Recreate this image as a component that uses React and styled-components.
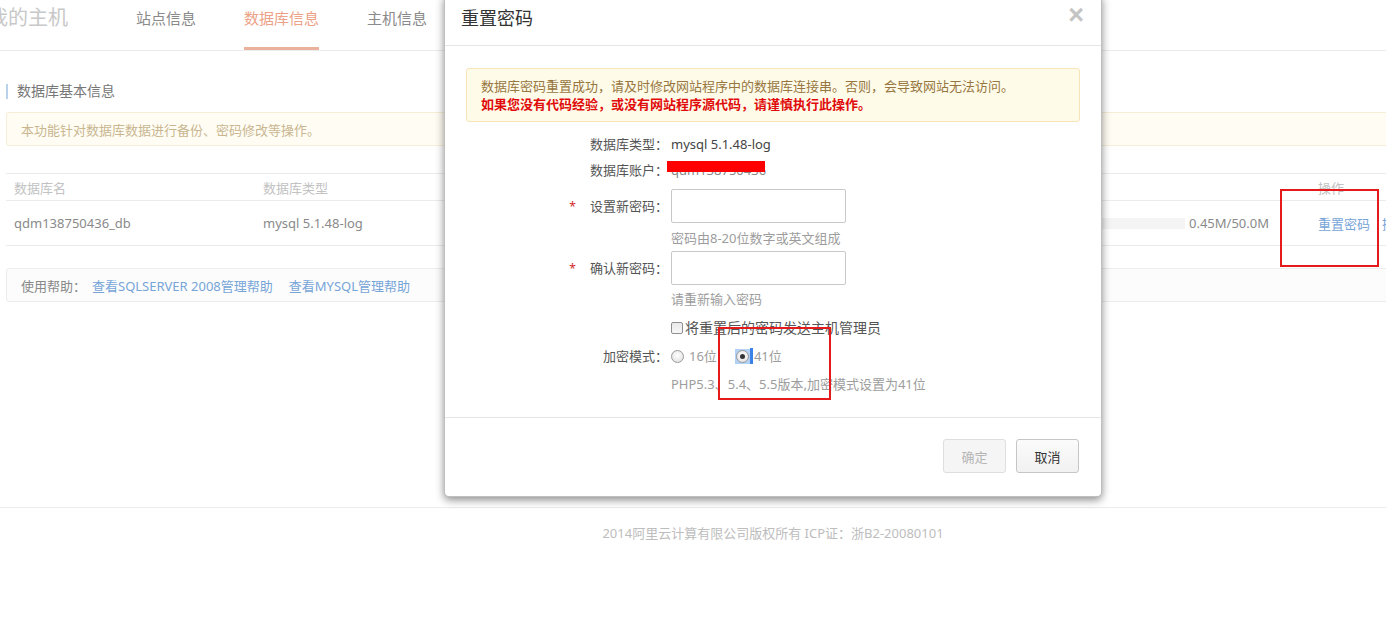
import React from "react";
import styled, { createGlobalStyle } from "styled-components";

const Global = createGlobalStyle`
  html, body { margin: 0; padding: 0; background: #fff; overflow: hidden; }
  body { font-family: "Noto Sans", "Noto Sans CJK SC", sans-serif; color: #555; }
  * { box-sizing: border-box; }
`;

const Page = styled.div`
  position: relative;
  width: 1546px;
  height: 635px;
`;

const Nav = styled.div`
  display: flex;
  align-items: flex-start;
  height: 51px;
  border-bottom: 1px solid #ececec;
`;

const Brand = styled.div`
  margin-left: -12px;
  width: 124px;
  padding-top: 6px;
  font-size: 20px;
  line-height: 24px;
  color: #c8c8c8;
`;

const Tab = styled.div`
  margin: 0 24px;
  height: 50px;
  padding-top: 8px;
  font-size: 15px;
  line-height: 20px;
  color: ${(p) => (p.$active ? "#eda287" : "#8a8a8a")};
  border-bottom: 3px solid ${(p) => (p.$active ? "#eab29c" : "transparent")};
`;

const Main = styled.div`
  padding: 32px 6px 0;
  height: 456px;
`;

const SectionTitle = styled.div`
  display: flex;
  align-items: center;
  font-size: 14px;
  line-height: 16px;
  color: #777;
  &::before {
    content: "";
    width: 2px;
    height: 15px;
    background: #b9d1ea;
    margin-right: 9px;
  }
`;

const Notice = styled.div`
  margin-top: 13px;
  height: 34px;
  border: 1px solid #f6eed6;
  background: #fffdf3;
  border-radius: 3px;
  padding-left: 14px;
  display: flex;
  align-items: center;
  font-size: 13px;
  color: #c9b691;
`;

const Table = styled.div`
  margin-top: 27px;
  border-top: 1px solid #ececec;
`;

const TRow = styled.div`
  display: grid;
  grid-template-columns: 249px 340px 305px 410px 1fr;
  height: ${(p) => p.$h}px;
  align-items: center;
  border-bottom: 1px solid #ececec;
  font-size: 13px;
  color: ${(p) => (p.$head ? "#c2c2c2" : "#8a8a8a")};
`;

const Cell = styled.div`
  padding-left: 8px;
  display: flex;
  align-items: center;
  white-space: nowrap;
`;

const Usage = styled.div`
  width: 277px;
  height: 11px;
  background: #f4f4f4;
  margin-right: 4px;
`;

const Link = styled.a`
  color: #77a5d8;
  text-decoration: none;
  margin-left: ${(p) => p.$ml || 0}px;
  margin-right: ${(p) => p.$mr || 0}px;
`;

const Help = styled.div`
  margin-top: 22px;
  height: 34px;
  border: 1px solid #ececec;
  background: #fcfcfc;
  border-radius: 3px;
  padding-left: 14px;
  display: flex;
  align-items: center;
  font-size: 13px;
  color: #888;
`;

const Footer = styled.div`
  border-top: 1px solid #ececec;
  padding-top: 16px;
  text-align: center;
  font-size: 13px;
  line-height: 18px;
  color: #bdbdbd;
`;

const Mark = styled.div`
  position: absolute;
  left: ${(p) => p.$x}px;
  top: ${(p) => p.$y}px;
  width: ${(p) => p.$w}px;
  height: ${(p) => p.$h}px;
  border: 2px solid #e51b1b;
  z-index: 5;
  pointer-events: none;
`;

const Modal = styled.div`
  position: absolute;
  left: 444px;
  top: -6px;
  width: 658px;
  height: 503px;
  background: #fff;
  border: 1px solid rgba(0, 0, 0, 0.25);
  border-radius: 5px;
  box-shadow: 0 3px 8px rgba(0, 0, 0, 0.45);
  display: flex;
  flex-direction: column;
  z-index: 3;
`;

const ModalHead = styled.div`
  height: 51px;
  flex: none;
  border-bottom: 1px solid #e5e5e5;
  display: flex;
  justify-content: space-between;
  align-items: flex-start;
  padding: 13px 17px 0 16px;
`;

const ModalTitle = styled.div`
  font-size: 18px;
  line-height: 20px;
  color: #333;
`;

const Close = styled.div`
  margin-top: -5px;
  font-size: 27px;
  font-weight: 700;
  line-height: 24px;
  color: #c4c4c4;
  font-family: "Liberation Sans", sans-serif;
`;

const ModalBody = styled.div`
  flex: 1;
  padding: 22px 21px 0 21px;
`;

const Alert = styled.div`
  border: 1px solid #f7e5b9;
  background: #fefbe9;
  border-radius: 3px;
  padding: 8px 14px;
  font-size: 13px;
  line-height: 18px;
  color: #97763f;
`;

const Danger = styled.div`
  color: #e00b0b;
  font-weight: bold;
`;

const Form = styled.div`
  margin-top: 9px;
  display: flex;
  flex-direction: column;
`;

const Row = styled.div`
  display: grid;
  grid-template-columns: 202px 1fr;
  column-gap: 3px;
  align-items: center;
  margin-top: ${(p) => p.$mt || 0}px;
  min-height: ${(p) => p.$h || 18}px;
`;

const Label = styled.div`
  text-align: right;
  font-size: 13px;
  line-height: 18px;
  color: #555;
  white-space: nowrap;
`;

const Star = styled.span`
  color: #d42b2b;
  margin-right: 14px;
  font-size: 12px;
`;

const Value = styled.div`
  position: relative;
  font-size: ${(p) => p.$size || 13}px;
  line-height: 18px;
  color: ${(p) => p.$color || "#444"};
  display: flex;
  align-items: center;
`;

const Redact = styled.div`
  position: absolute;
  left: -4px;
  top: 0;
  width: 98px;
  height: 11px;
  background: #ff0000;
`;

const Input = styled.input`
  width: 175px;
  height: 34px;
  border: 1px solid #c9c9c9;
  border-radius: 2px;
  outline: none;
  padding: 0 8px;
  font-size: 13px;
`;

const Hint = styled.div`
  font-size: 13px;
  line-height: 16px;
  color: #9d9d9d;
  white-space: nowrap;
`;

const Check = styled.span`
  width: 12px;
  height: 12px;
  border: 1px solid #8f8f8f;
  border-radius: 2px;
  background: linear-gradient(#e9e9e9, #f7f7f7);
  margin-right: 2px;
  flex: none;
`;

const Radio = styled.span`
  position: relative;
  width: 13px;
  height: 13px;
  border-radius: 50%;
  border: 1px solid #9a9a9a;
  background: radial-gradient(circle at 50% 40%, #fff, #dcdcdc);
  flex: none;
  &::after {
    content: "";
    display: ${(p) => (p.$on ? "block" : "none")};
    position: absolute;
    left: 3px;
    top: 3px;
    width: 5px;
    height: 5px;
    border-radius: 50%;
    background: #333;
  }
`;

const Focus = styled.span`
  display: flex;
  align-items: center;
  padding: 1px;
  background: #b3d1f5;
  margin-left: 18px;
`;

const Caret = styled.span`
  width: 3px;
  height: 16px;
  background: #3a82e6;
  margin-right: 1px;
`;

const Opt = styled.span`
  color: #9d9d9d;
  margin-left: ${(p) => p.$ml || 0}px;
`;

const ModalFoot = styled.div`
  flex: none;
  height: 79px;
  border-top: 1px solid #e5e5e5;
  display: flex;
  justify-content: flex-end;
  align-items: flex-start;
  gap: 10px;
  padding: 21px 22px 0 0;
`;

const Btn = styled.button`
  width: 63px;
  height: 34px;
  border-radius: 3px;
  font-family: inherit;
  font-size: 13px;
  border: 1px solid ${(p) => (p.$disabled ? "#dedede" : "#c6c6c6")};
  background: ${(p) => (p.$disabled ? "#f5f5f5" : "linear-gradient(#fbfbfb, #f1f1f1)")};
  color: ${(p) => (p.$disabled ? "#b5b5b5" : "#333")};
`;

export default function App() {
  return (
    <>
      <Global />
      <Page>
        <Nav>
          <Brand>我的主机</Brand>
          <Tab>站点信息</Tab>
          <Tab $active>数据库信息</Tab>
          <Tab>主机信息</Tab>
        </Nav>
        <Main>
          <SectionTitle>数据库基本信息</SectionTitle>
          <Notice>本功能针对数据库数据进行备份、密码修改等操作。</Notice>
          <Table>
            <TRow $head $h={27}>
              <Cell>数据库名</Cell>
              <Cell>数据库类型</Cell>
              <Cell>状态</Cell>
              <Cell>已使用空间</Cell>
              <Cell>操作</Cell>
            </TRow>
            <TRow $h={45}>
              <Cell>qdm138750436_db</Cell>
              <Cell>mysql 5.1.48-log</Cell>
              <Cell>运行中</Cell>
              <Cell>
                <Usage />
                0.45M/50.0M
              </Cell>
              <Cell>
                <Link $mr={12}>重置密码</Link>
                <Link>操作日志</Link>
              </Cell>
            </TRow>
          </Table>
          <Help>
            使用帮助：
            <Link $ml={6} $mr={16}>查看SQLSERVER 2008管理帮助</Link>
            <Link>查看MYSQL管理帮助</Link>
          </Help>
        </Main>
        <Footer>2014阿里云计算有限公司版权所有 ICP证：浙B2-20080101</Footer>

        <Modal>
          <ModalHead>
            <ModalTitle>重置密码</ModalTitle>
            <Close>×</Close>
          </ModalHead>
          <ModalBody>
            <Alert>
              <div>数据库密码重置成功，请及时修改网站程序中的数据库连接串。否则，会导致网站无法访问。</div>
              <Danger>如果您没有代码经验，或没有网站程序源代码，请谨慎执行此操作。</Danger>
            </Alert>
            <Form>
              <Row $h={26}>
                <Label>数据库类型：</Label>
                <Value>mysql 5.1.48-log</Value>
              </Row>
              <Row $h={26}>
                <Label>数据库账户：</Label>
                <Value $color="#888">
                  qdm138750436
                  <Redact />
                </Value>
              </Row>
              <Row $mt={6} $h={34}>
                <Label><Star>*</Star>设置新密码：</Label>
                <Value><Input type="password" /></Value>
              </Row>
              <Row $mt={7} $h={16}>
                <span />
                <Hint>密码由8-20位数字或英文组成</Hint>
              </Row>
              <Row $mt={5} $h={34}>
                <Label><Star>*</Star>确认新密码：</Label>
                <Value><Input type="password" /></Value>
              </Row>
              <Row $mt={6} $h={16}>
                <span />
                <Hint>请重新输入密码</Hint>
              </Row>
              <Row $mt={12} $h={18}>
                <span />
                <Value $size={14} $color="#555">
                  <Check />
                  将重置后的密码发送主机管理员
                </Value>
              </Row>
              <Row $mt={10} $h={18}>
                <Label>加密模式：</Label>
                <Value>
                  <Radio />
                  <Opt $ml={5}>16位</Opt>
                  <Focus><Radio $on /></Focus>
                  <Caret />
                  <Opt>41位</Opt>
                </Value>
              </Row>
              <Row $mt={11} $h={16}>
                <span />
                <Hint>PHP5.3、5.4、5.5版本,加密模式设置为41位</Hint>
              </Row>
            </Form>
          </ModalBody>
          <ModalFoot>
            <Btn $disabled>确定</Btn>
            <Btn>取消</Btn>
          </ModalFoot>
        </Modal>

        <Mark $x={718} $y={327} $w={113} $h={73} />
        <Mark $x={1280} $y={189} $w={99} $h={78} />
      </Page>
    </>
  );
}
